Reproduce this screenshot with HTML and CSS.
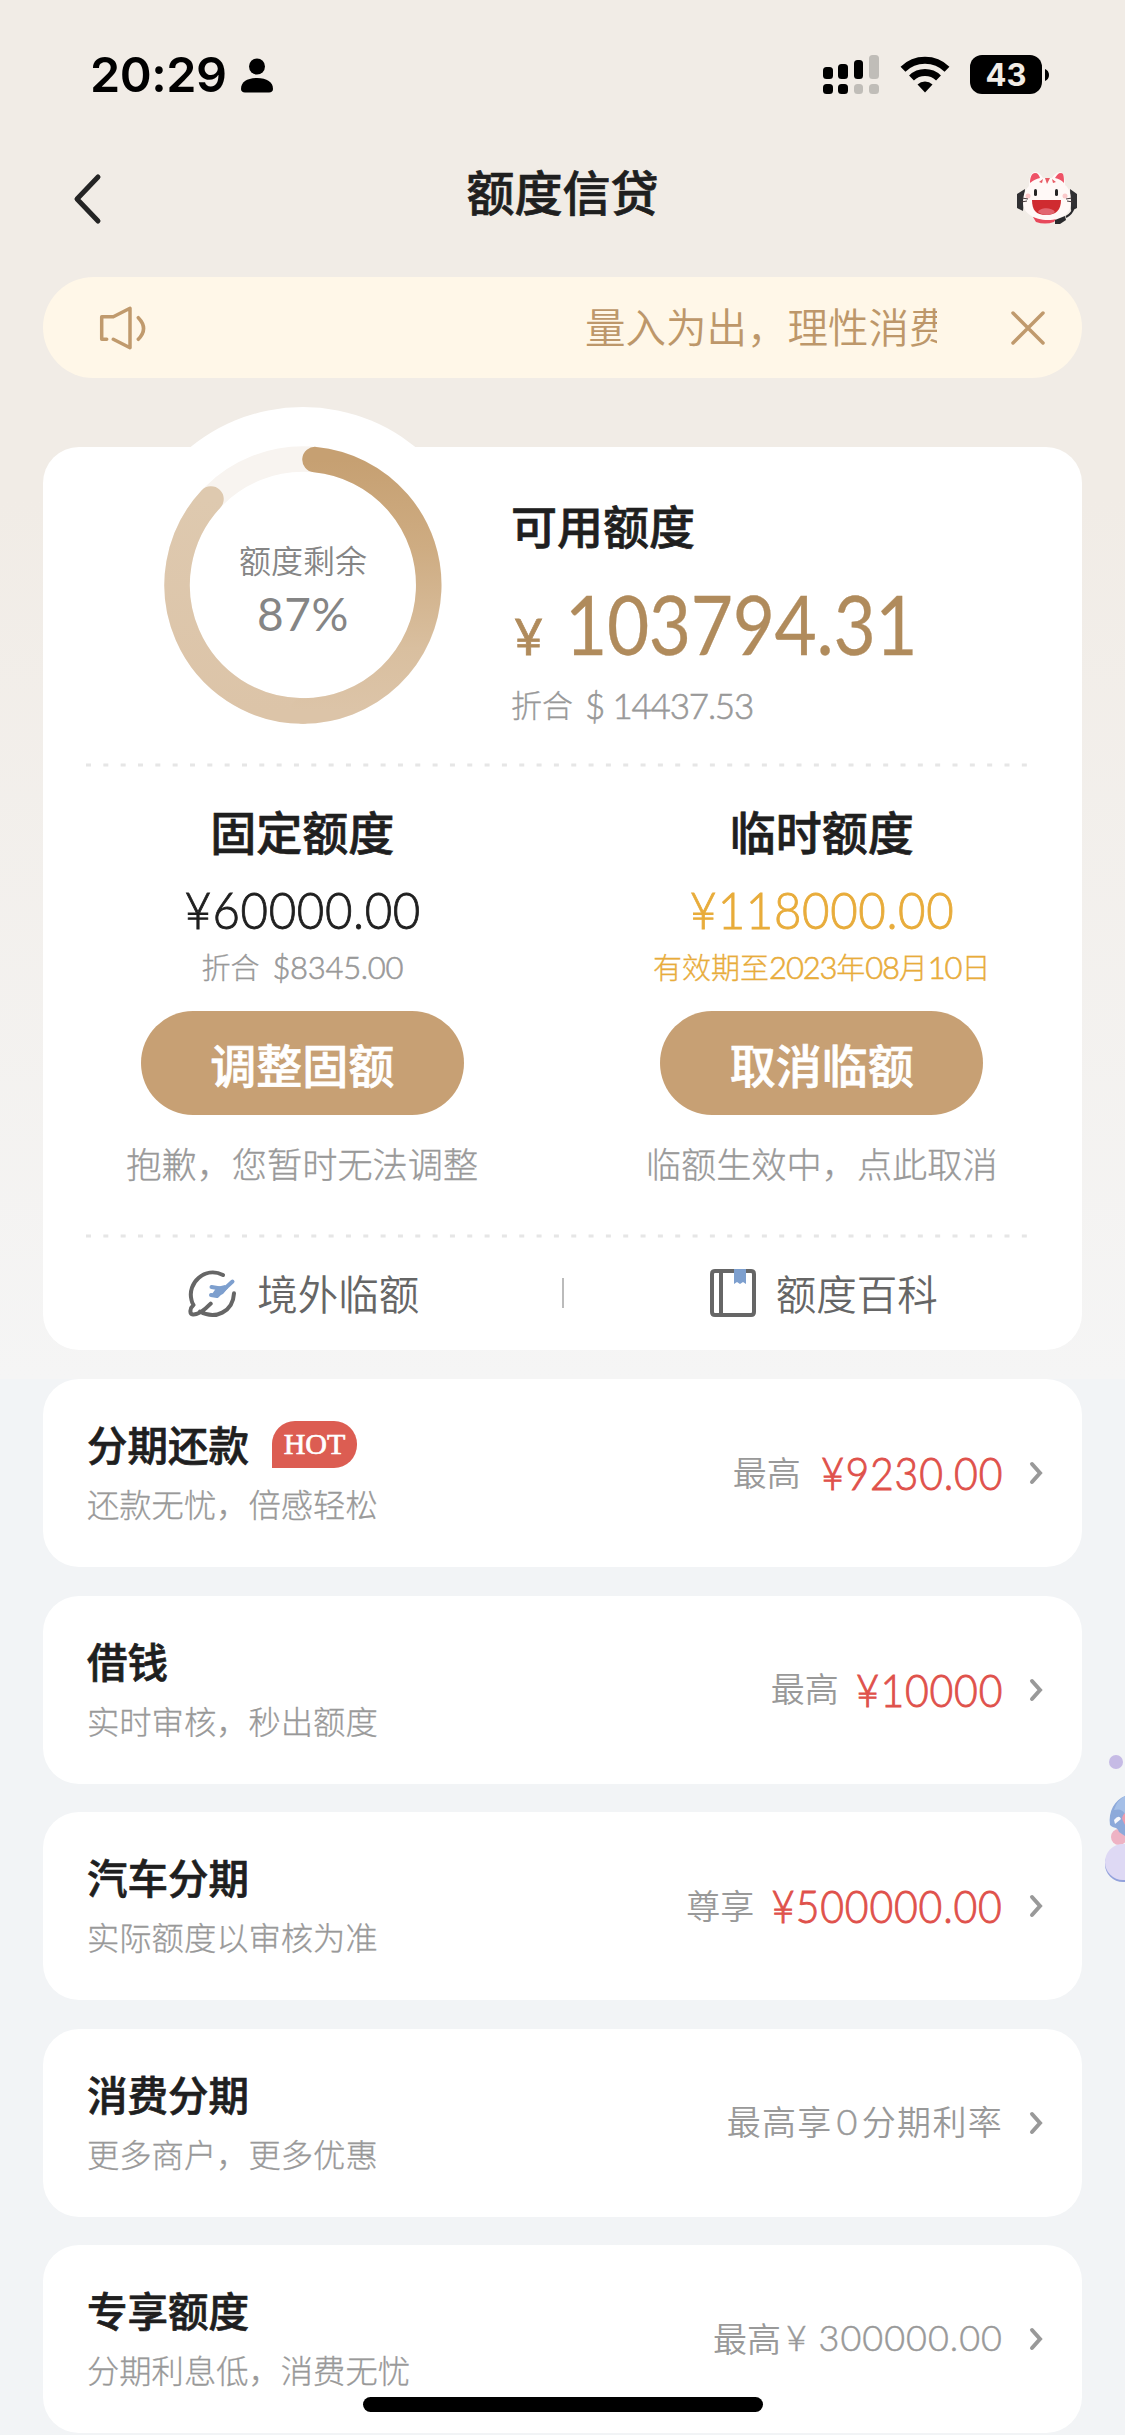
FILE: index.html
```html
<!DOCTYPE html>
<html lang="zh-CN">
<head>
<meta charset="utf-8">
<title>额度信贷</title>
<link rel="stylesheet" href="styles.css">
</head>
<body>
<div class="screen">
  <div class="status">
    <span class="time">20:29</span>
    <svg class="person" width="32" height="35" viewBox="0 0 32 35"><circle cx="16" cy="8.5" r="8"/><path d="M0 31C0 24 6 20 16 20s16 4 16 11c0 2-1.500 3.500-4 3.500H4C1.500 34.500 0 33 0 31z"/></svg>
    <svg class="signal" width="56" height="39" viewBox="0 0 56 39"><rect x="0" y="12" width="10" height="12" rx="3.500"/><rect x="15" y="9" width="10" height="15" rx="3.500"/><rect x="31" y="5" width="9" height="19" rx="3.500"/><rect class="off" x="46" y="0" width="10" height="24" rx="3.500"/><rect x="0" y="29" width="10" height="10" rx="3.500"/><rect x="15" y="29" width="10" height="10" rx="3.500"/><rect class="off" x="31" y="29" width="9" height="10" rx="3.500"/><rect class="off" x="46" y="29" width="10" height="10" rx="3.500"/></svg>
    <svg class="wifi" width="50" height="38" viewBox="0 0 50 38"><g fill="none" stroke="#000" stroke-width="7"><path d="M3 13.200a31.500 31.500 0 0 1 44 0"/><path d="M11.500 22a19.500 19.500 0 0 1 27 0"/></g><path d="M17.500 28.500a10.800 10.800 0 0 1 15 0L25 36.500z"/></svg>
    <span class="battery"><span class="level">43</span><svg width="4" height="12" viewBox="0 0 4 12"><path d="M0 0c2.500.8 4 3.200 4 6s-1.500 5.200-4 6z"/></svg></span>
  </div>
  <div class="nav">
    <svg class="back" width="30" height="52" viewBox="0 0 30 52"><path d="M26 4 5 26l21 22"/></svg>
    <h1>额度信贷</h1>
    <svg class="agent" width="62" height="54" viewBox="0 0 62 54">
      <path d="M9 18 1 23v14l6 3zM54 18l7 5v14l-6 3z" fill="#303033"/>
      <path d="M17 46h24l-3 5q-9 3-18 0z" fill="#e8485b"/>
      <path d="M13 15C13 7 15 1 19 1s6 3 8 6h9c2-3 5-6 8-6s5 6 5 13c5 4 6 10 6 18 0 10-9 17-23 17S7 42 7 32c0-8 2-13 6-17z" fill="#fff9f7"/>
      <path d="M14 12c0-6 2-10 5-10s4 2 5 5c-4 1-6 2-10 5zM39 7c2-3 3-5 6-5s3 5 3 10c-3-3-5-4-9-5z" fill="#ee5266"/>
      <path d="m29 7 2 6 3-6zM23 11l4-3-1 4zM36 8l4 3-3 1z" fill="#e85b64"/>
      <rect x="18" y="18" width="3" height="7" rx="1.500" fill="#252525"/><rect x="39" y="18" width="3" height="7" rx="1.500" fill="#252525"/>
      <circle cx="12" cy="25" r="2.500" fill="#fbc9ca"/><circle cx="49" cy="25" r="2.500" fill="#fbc9ca"/>
      <path d="M16 29h29c0 10-5 15-15 15s-14-5-14-15z" fill="#cf2b30"/><path d="M22 41c2-5 14-5 17 0-4 4-12 4-17 0z" fill="#e26670"/>
      <path d="M6 27l6 1M5 31l6-1M50 28l6-1M51 30l6 1" stroke="#44393a"/>
      <path d="M58 36q-2 7-8 10" fill="none" stroke="#29292c" stroke-width="2"/><path d="m39 49 10-4 1 4-6 4h-5z" fill="#29292c"/>
    </svg>
  </div>
  <div class="notice">
    <svg width="50" height="46" viewBox="0 0 50 46"><path d="M9.700 34.300h-5V11.700h11.600L33 3.300v39.400l-16.700-8.400M41.300 12.700q10.500 10.800 0 21.600"/></svg>
    <div class="marquee">量入为出，理性消费</div>
    <svg width="36" height="36" viewBox="0 0 36 36"><path d="m3 3 30 30M33 3 3 33"/></svg>
  </div>

  <section class="quota">
    <div class="overview">
      <div class="gauge">
        <svg width="356" height="356" viewBox="-178 -178 356 356">
          <defs><linearGradient id="ring" x1="0" y1="0" x2="0" y2="1"><stop offset="0" stop-color="#c6a072"/><stop offset=".35" stop-color="#ceac82"/><stop offset=".75" stop-color="#d9bf9f"/><stop offset="1" stop-color="#dcc4a8"/></linearGradient><linearGradient id="tail" x1="0" y1="0" x2="0" y2="1"><stop offset="0" stop-color="#dec9af"/><stop offset="1" stop-color="#dcc4a8"/></linearGradient></defs>
          <circle r="178" fill="#fff"/>
          <circle r="126" fill="none" stroke="#f8f4f0" stroke-width="25.500"/>
          <path d="M0 126A126 126 0 0 1-92-86" fill="none" stroke="url(#tail)" stroke-width="25.500" stroke-linecap="round"/>
          <path d="M12-125.400A126 126 0 0 1 0 126" fill="none" stroke="url(#ring)" stroke-width="25.500" stroke-linecap="round"/>
        </svg>
        <div class="gauge-text"><span>额度剩余</span><b>87%</b></div>
      </div>
      <div class="available">
        <h2>可用额度</h2>
        <div class="total"><small>¥</small><span>103794.31</span></div>
        <div class="usd">折合<span>$ 14437.53</span></div>
      </div>
    </div>
    <svg class="rule" width="942" height="4"><path d="M0 2h942"/></svg>
    <div class="split">
      <div class="limit">
        <h2>固定额度</h2>
        <div class="sum">¥60000.00</div>
        <div class="sub">折合<span class="fx">$8345.00</span></div>
        <button>调整固额</button>
        <p>抱歉，您暂时无法调整</p>
      </div>
      <div class="limit temp">
        <h2>临时额度</h2>
        <div class="sum">¥118000.00</div>
        <div class="sub">有效期至<span>2023</span>年<span>08</span>月<span>10</span>日</div>
        <button>取消临额</button>
        <p>临额生效中，点此取消</p>
      </div>
    </div>
    <svg class="rule" width="942" height="4"><path d="M0 2h942"/></svg>
    <div class="links">
      <a><svg width="50" height="50" viewBox="0 0 50 50"><path class="line" d="M36 7C18-2 0 15 4.500 32q.5 3 2 5C3 40 2 46 6 46.500c5 .5 12-5 17.700-10.800M47 25.300C46 44 28 52 13 43.500"/><path class="plane" d="M45.500 13.500 33 25l-3 3-6-1M24.500 19l9 1.500"/><path class="blue" d="m30 19 8-2 3 3-5 6-8 3-3-3z"/></svg>境外临额</a>
      <i></i>
      <a><svg width="46" height="50" viewBox="0 0 46 50"><path class="line" d="M5 3h36q3 0 3 3v38q0 3-3 3H5q-3 0-3-3V6q0-3 3-3zM11 3v44"/><path class="blue" d="M24 1h12v15l-3-2-3 2-3-2-3 2z"/></svg>额度百科</a>
    </div>
  </section>

  <main class="offers">
    <article><div><h3>分期还款<em>HOT</em></h3><p>还款无忧，倍感轻松</p></div><div class="value">最高<b>¥9230.00</b></div><svg width="14" height="24" viewBox="0 0 14 24"><path d="m3 3 8 9-8 9"/></svg></article>
    <article><div><h3>借钱</h3><p>实时审核，秒出额度</p></div><div class="value">最高<b>¥10000</b></div><svg width="14" height="24" viewBox="0 0 14 24"><path d="m3 3 8 9-8 9"/></svg></article>
    <article><div><h3>汽车分期</h3><p>实际额度以审核为准</p></div><div class="value wide">尊享<b>¥500000.00</b></div><svg width="14" height="24" viewBox="0 0 14 24"><path d="m3 3 8 9-8 9"/></svg></article>
    <article><div><h3>消费分期</h3><p>更多商户，更多优惠</p></div><div class="value spaced">最高享<span>0</span>分期利率</div><svg width="14" height="24" viewBox="0 0 14 24"><path d="m3 3 8 9-8 9"/></svg></article>
    <article><div><h3>专享额度</h3><p>分期利息低，消费无忧</p></div><div class="value plain">最高<span>¥ 300000.00</span></div><svg width="14" height="24" viewBox="0 0 14 24"><path d="m3 3 8 9-8 9"/></svg></article>
  </main>
  <svg class="float" width="20" height="136" viewBox="0 0 20 136"><circle cx="11" cy="10" r="7" fill="#c6bbe5"/><circle cx="14" cy="85" r="8" fill="#eeb3c4"/><path d="M20 44C10 48 3 59 5 73c4 4 7 1 9 7l6 4z" fill="#8da9da"/><path d="M20 44q-8 4-11 14 8-2 11 4z" fill="#a5bfe7"/><path d="M9 68q5-6 7-1l-6 5z" fill="#f7f7fc"/><path d="M20 61q-5 4-1 10l1 2z" fill="#ee9cad"/><circle cx="18" cy="112" r="18" fill="#93a2dc"/><circle cx="18" cy="110" r="18" fill="#ded9f4"/></svg>
  <div class="home"></div>
</div>
</body>
</html>
```
FILE: styles.css
```css
* { box-sizing: border-box; }
body { margin: 0; background: #f2f4f6; }
h1, h2, h3, p { margin: 0; font-weight: 500; }
h1, h2, h3, .limit button { -webkit-text-stroke: .7px currentColor; }
svg { display: block; flex: none; }
.screen {
  position: relative; width: 1125px; height: 2435px; overflow: hidden;
  padding: 0 43px; color: #1f1f1f;
  font-family: "Noto Sans CJK SC", sans-serif;
  background: linear-gradient(#f1ece6 0, #f1ece6 500px, #f5f5f5 1379px, #f2f4f6 1379px);
}
.status { height: 150px; display: flex; align-items: flex-start; padding: 54px 33px 0 47px; }
.time { font: 600 48.500px/42px Inter, sans-serif; letter-spacing: -.5px; width: 150px; white-space: nowrap; color: #000; }
.person { margin: 4px 0 0 1px; }
.signal { margin: 1px 0 0 auto; }
.off { fill: #c0bdb8; }
.wifi { margin: 2px 20px 0 21px; }
.battery { display: flex; align-items: center; gap: 3px; margin-top: 1px; }
.level { width: 72px; height: 39px; border-radius: 12px; background: #000; color: #f1ece6; font: 700 31px/39px Inter, sans-serif; text-align: center; }
.nav { height: 127px; display: grid; grid-template-columns: 100px 1fr 100px; align-items: start; padding: 0 4px 0 29px; }
.back { margin-top: 23px; }
.back path { fill: none; stroke: #242424; stroke-width: 5; stroke-linecap: round; stroke-linejoin: round; }
.nav h1 { font-size: 48px; line-height: 60px; margin: 10px 0 0 -25px; text-align: center; }
.agent { margin-top: 21px; justify-self: end; }
.notice { height: 101px; border-radius: 51px; background: #fff7e8; display: flex; align-items: center; padding: 0 36px 0 54px; color: #bd976a; }
.notice path { fill: none; stroke: #c09a6d; stroke-width: 3.500; stroke-linecap: round; stroke-linejoin: round; }
.marquee { margin: -3px auto 0 438px; width: 352px; overflow: hidden; white-space: nowrap; font-size: 40.500px; line-height: 60px; font-weight: 350; }
.quota { margin-top: 69px; height: 903px; border-radius: 36px; background: #fff; }
.overview { height: 316px; display: flex; }
.gauge { width: 356px; height: 356px; margin: -40px 0 0 82px; display: grid; }
.gauge > * { grid-area: 1 / 1; }
.gauge-text { display: flex; flex-direction: column; align-items: center; color: #858585; padding-top: 132px; }
.gauge-text span { font-size: 32px; line-height: 40px; font-weight: 350; }
.gauge-text b { font: 400 46px/56px Lato, sans-serif; margin-top: 7px; letter-spacing: .6px; }
.available { margin-left: 30px; padding-top: 47px; }
.available h2, .limit h2 { font-size: 46px; line-height: 60px; }
.total { display: flex; align-items: baseline; color: #b08b5c; font-family: Lato, sans-serif; line-height: 100px; margin-top: 20px; white-space: nowrap; }
.total small { font-size: 50px; width: 54px; padding-left: 3px; -webkit-text-stroke: .8px currentColor; }
.total span { font-size: 81px; letter-spacing: -.400px; transform: scaleX(.9); transform-origin: left; -webkit-text-stroke: .3px currentColor; }
.usd { color: #999; font-size: 31px; line-height: 40px; margin-top: -2px; white-space: nowrap; display: flex; gap: 12px; font-weight: 300; }
.usd span { font: 300 35px/42px Lato, sans-serif; letter-spacing: -1.200px; -webkit-text-stroke: .6px currentColor; }
.usd, .sub, .limit p, .offers p { -webkit-text-stroke: .3px currentColor; }
.rule { margin-left: 43px; }
.rule path { stroke: #e6e6e6; stroke-width: 3; stroke-dasharray: 5 12.330; }
.split { display: grid; grid-template-columns: 1fr 1fr; height: 467px; }
.limit { display: flex; flex-direction: column; align-items: center; padding: 33px 1px 0 0; }
.sum { font: 300 51.500px/64px Lato, sans-serif; letter-spacing: .7px; margin-top: 17px; white-space: nowrap; transform: scaleX(.92); -webkit-text-stroke: .9px currentColor; }
.sub { color: #999; font-size: 29px; line-height: 40px; margin-top: 5px; white-space: nowrap; display: flex; font-weight: 300; }
.sub span { font: 300 31px/42px Lato, sans-serif; letter-spacing: -1.200px; -webkit-text-stroke: .6px currentColor; }
.sub .fx { margin-left: 13px; letter-spacing: -.3px; }
.temp .sum, .temp .sub { color: #e8ac3b; }
.limit button { width: 323px; height: 104px; border: 0; border-radius: 52px; margin-top: 23px; padding: 0; background: #c7a074; color: #fff; font: 500 46px/96px "Noto Sans CJK SC", sans-serif; }
.limit p { color: #999; font-size: 35.200px; line-height: 50px; margin-top: 23px; }
.limit p, .offers p { font-weight: 300; }
.links { height: 109px; display: grid; grid-template-columns: 1fr 2px 1fr; align-items: center; color: #666; font-size: 40.500px; line-height: 60px; font-weight: 350; }
.links a { display: flex; align-items: center; justify-content: center; gap: 20px; padding-left: 2px; }
.links i { height: 30px; background: #bbb; }
.line { fill: none; stroke: #666; stroke-width: 4; stroke-linecap: round; stroke-linejoin: round; }
.blue { fill: #7d9fce; }
.plane { fill: none; stroke: #7d9fce; stroke-width: 4; stroke-linecap: round; stroke-linejoin: round; }
.offers { display: flex; flex-direction: column; gap: 28.500px; padding-top: 29px; }
.offers article { height: 188px; flex: none; border-radius: 36px; background: #fff; display: flex; align-items: flex-start; padding: 35px 39px 0 44px; }
.offers h3 { font-size: 40.500px; line-height: 60px; display: flex; align-items: center; }
.offers em { font: 400 30px/46px "Liberation Serif", serif; color: #fff; background: #dc5d52; width: 85px; height: 47px; text-align: center; border-radius: 23px 23px 23px 0; margin-left: 23px; }
.offers p { font-size: 32.300px; line-height: 44px; color: #999; margin-top: 7px; }
.value { margin-left: auto; height: 114px; display: flex; align-items: center; color: #999; font-size: 34px; white-space: nowrap; font-weight: 350; }
.value b { font: 300 44.500px/60px Lato, sans-serif; letter-spacing: .9px; color: #df514b; margin: 4px 0 0 4px; transform: scaleX(.92); transform-origin: right; -webkit-text-stroke: .9px currentColor; }
.wide b { margin-left: -3px; }
.value span { font: 300 36px/50px Lato, sans-serif; -webkit-text-stroke: .5px currentColor; }
.spaced { letter-spacing: 1.300px; }
.spaced span { margin: 0 3px 0 4px; }
.plain span { margin-left: 5px; letter-spacing: 1px; }
.offers article > svg { margin: 47px 0 0 26px; }
.offers article > svg path { fill: none; stroke: #999; stroke-width: 4; stroke-linecap: round; }
.float { position: absolute; right: 0; top: 1752px; }
.home { position: absolute; left: 363px; top: 2397px; width: 400px; height: 15px; border-radius: 8px; background: #000; }
```
